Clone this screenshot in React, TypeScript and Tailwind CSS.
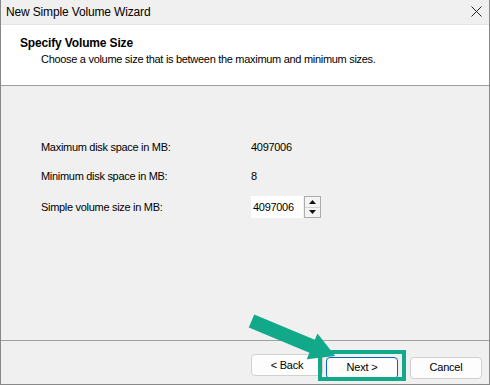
import React from 'react';

const font = { fontFamily: '"Liberation Sans", Arial, sans-serif' };

function Arrow() {
  return (
    <svg className="absolute left-0 top-0 pointer-events-none" width="490" height="385" viewBox="0 0 490 385">
      {/* highlight box around Next */}
      <rect x="319" y="352" width="84" height="27" fill="none" stroke="#12a98b" strokeWidth="4" />
      <polygon
        points="253.2,314.5 313.8,339.8 316.5,333.4 334.2,355.9 305.7,359.2 308.4,352.8 247.8,327.5"
        fill="#12a98b"
      />
    </svg>
  );
}

function Spinner() {
  return (
    <div className="flex flex-col w-[17px] h-[22px] ml-[1px] border border-[#acacac] bg-[#f4f4f4]">
      <div className="flex-1 flex items-center justify-center border-b border-[#d4d4d4]">
        <svg width="7" height="4" viewBox="0 0 7 4"><polygon points="3.5,0 7,4 0,4" fill="#111" /></svg>
      </div>
      <div className="flex-1 flex items-center justify-center">
        <svg width="7" height="4" viewBox="0 0 7 4"><polygon points="0,0 7,0 3.5,4" fill="#111" /></svg>
      </div>
    </div>
  );
}

function Btn({ label, primary }: { label: string; primary?: boolean }) {
  return (
    <button
      className={
        'w-[72px] h-[22px] rounded-[4px] bg-[#fdfdfd] text-[11px] tracking-[-0.2px] text-black leading-none ' +
        (primary ? 'border border-[#0067c0]' : 'border border-[#d0d0d0]')
      }
      style={font}
    >
      {label}
    </button>
  );
}

export default function App() {
  return (
    <div
      className="relative w-[490px] h-[385px] box-border border-l border-r border-b border-[#888888] bg-[#f0f0f0] text-black overflow-hidden"
      style={font}
    >
      {/* title bar */}
      <div className="h-[25px] flex items-center justify-between pl-[5px] pr-[5px] bg-[#f0f0f0] border-b border-[#e4e4e4]">
        <span className="text-[12px] tracking-[-0.15px]">New Simple Volume Wizard</span>
        <svg width="11" height="11" viewBox="0 0 11 11" className="mr-[2px] -mt-[2px]">
          <path d="M0.5 0.5 L10.5 10.5 M10.5 0.5 L0.5 10.5" stroke="#222" strokeWidth="1" />
        </svg>
      </div>

      {/* header */}
      <div className="h-[61px] bg-white border-b border-[#a0a0a0] pl-[19px] pt-[10px]">
        <div className="text-[12px] font-bold leading-[16px] tracking-[-0.15px]">Specify Volume Size</div>
        <div className="text-[11px] leading-[16px] pl-[21px] tracking-[-0.3px]">
          Choose a volume size that is between the maximum and minimum sizes.
        </div>
      </div>

      {/* body */}
      <div className="h-[255px] border-b border-[#a0a0a0] pl-[40px] pt-[53px] text-[11px] tracking-[-0.3px]">
        <div className="flex items-center h-[16px]">
          <span className="w-[210px]">Maximum disk space in MB:</span>
          <span>4097006</span>
        </div>
        <div className="flex items-center h-[16px] mt-[13px]">
          <span className="w-[210px]">Minimum disk space in MB:</span>
          <span>8</span>
        </div>
        <div className="flex items-center h-[22px] mt-[12px]">
          <span className="w-[210px]">Simple volume size in MB:</span>
          <div className="flex items-center">
            <div className="w-[52px] h-[22px] bg-white flex items-center pl-[2px]">4097006</div>
            <Spinner />
          </div>
        </div>
      </div>

      {/* footer */}
      <div className="flex pt-[13px] pl-[250px]">
        <Btn label="< Back" />
        <div className="ml-[3px]">
          <Btn label="Next >" primary />
        </div>
        <div className="ml-[12px]">
          <Btn label="Cancel" />
        </div>
      </div>

      <Arrow />
    </div>
  );
}
